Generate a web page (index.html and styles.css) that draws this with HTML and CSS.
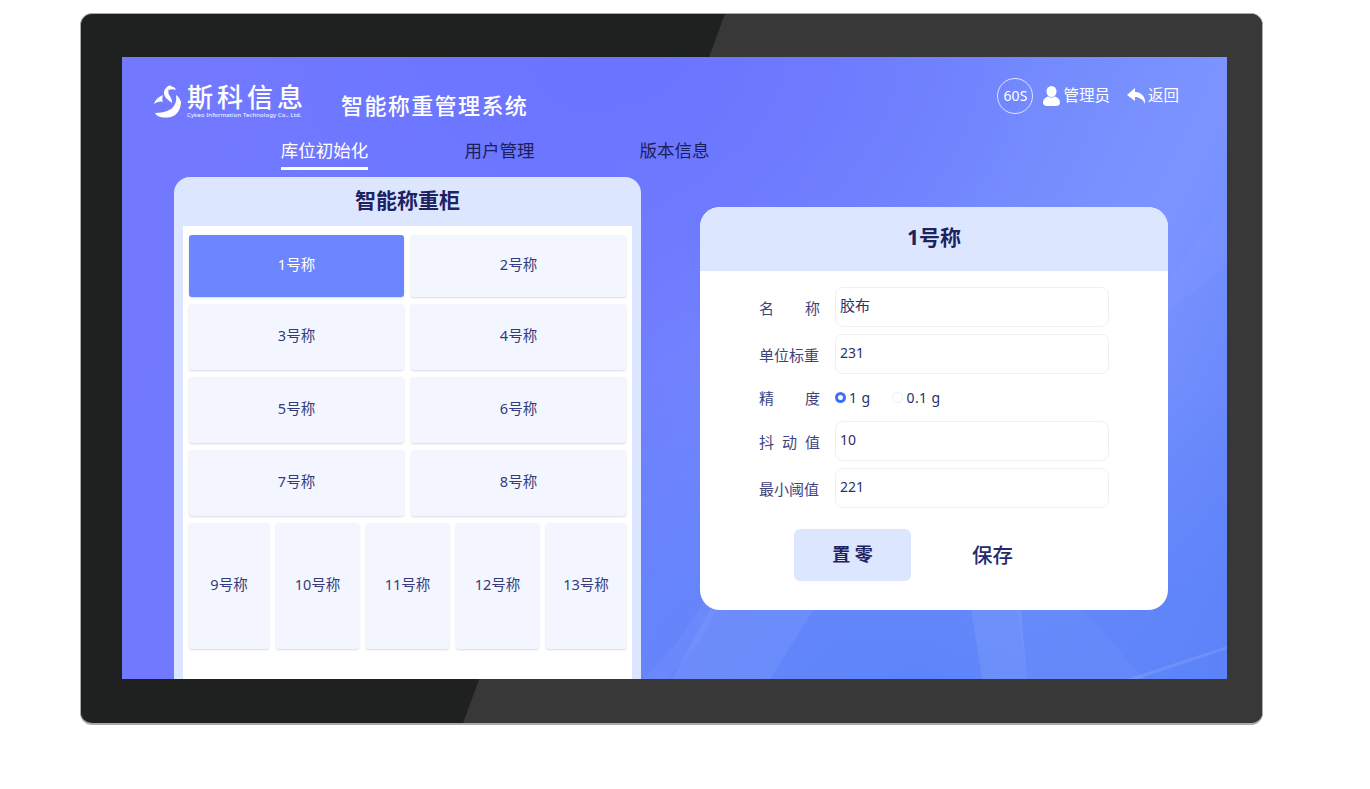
FILE: index.html
```html
<!DOCTYPE html>
<html lang="zh-CN">
<head>
  <meta charset="UTF-8">
  <title>智能称重管理系统</title>
  <link rel="stylesheet" href="styles.css">
</head>
<body>
<div class="device">
  <div class="screen">
    <svg class="decor" width="1105" height="622" viewBox="0 0 1105 622">
      <polygon points="550,622 595,540 700,540 648,622" fill="#fff" opacity="0.06"></polygon>
      <path d="M520,622C545,600 565,575 585,540L600,540C585,580 560,605 545,622Z" fill="#fff" opacity="0.04"></path>
      <polygon points="847,540 898,540 905,622 860,622" fill="#fff" opacity="0.08"></polygon>
      <polygon points="894,540 950,540 1022,622 905,622" fill="#fff" opacity="0.03"></polygon>
      <polygon points="1105,210 1010,280 1105,140" fill="#fff" opacity="0.025"></polygon>
      <polygon points="1005,622 1105,589 1105,592 1016,622" fill="#fff" opacity="0.1"></polygon>
    </svg>

    <!-- 顶部 -->
    <div class="top-bar">
      <div class="logo">
        <svg class="logo-mark" width="27" height="33" viewBox="0 0 27 33">
          <path d="M1 28C4 33 10 33 17 32C24 30 27 23 27 17C26 14 24 11 22 10C23 16 21 21 17 24C12 27 6 28 1 28Z" fill="#fff"></path>
          <path d="M17 0C13 1 10 4 10 8C10 12 14 15 18 18C18.500 14 15.500 11 14.500 8.500C14 5 15 2 17 0Z" fill="#fff"></path>
          <path d="M15 1C18 1 21 2 22 5C20 4 17 4 15 5Z" fill="#fff"></path>
          <path d="M0 19C1 15 4 12 9 10C8 13 8 15 9 17C6 16 3 17 0 19Z" fill="#fff"></path>
        </svg>
        <div class="logo-text">
          <div class="logo-cn">斯科信息</div>
          <div class="logo-en">Cykeo Information Technology Co., Ltd.</div>
        </div>
      </div>
      <div class="sys-title">智能称重管理系统</div>
      <div class="top-right">
        <div class="timer">60S</div>
        <svg class="icon-user" width="17" height="20" viewBox="0 0 17 20">
          <ellipse cx="8.500" cy="5.500" rx="5" ry="5.500" fill="#fff"></ellipse>
          <path d="M0 17C0 13 3 11 5 10.500C7 12 10 12 12 10.500C14 11 17 13 17 17C17 19 15 20 13 20H4C2 20 0 19 0 17Z" fill="#fff"></path>
        </svg>
        <span class="top-link">管理员</span>
        <svg class="icon-back" width="19" height="16" viewBox="0 0 19 16">
          <path d="M8 0L0 7L8 13V9C12 9 16 11 18 16C19 10 15 4 8 4Z" fill="#fff"></path>
        </svg>
        <span class="top-link">返回</span>
      </div>
    </div>

    <!-- 导航 -->
    <div class="nav">
      <div class="nav-item active"><span>库位初始化</span></div>
      <div class="nav-item"><span>用户管理</span></div>
      <div class="nav-item"><span>版本信息</span></div>
    </div>

    <div class="main">
      <!-- 左侧称重柜 -->
      <div class="cabinet">
        <div class="cabinet-title">智能称重柜</div>
        <div class="cabinet-body">
          <div class="scale-grid">
            <div class="scale selected">1号称</div>
            <div class="scale">2号称</div>
            <div class="scale">3号称</div>
            <div class="scale">4号称</div>
            <div class="scale">5号称</div>
            <div class="scale">6号称</div>
            <div class="scale">7号称</div>
            <div class="scale">8号称</div>
          </div>
          <div class="scale-row">
            <div class="scale">9号称</div>
            <div class="scale">10号称</div>
            <div class="scale">11号称</div>
            <div class="scale">12号称</div>
            <div class="scale">13号称</div>
          </div>
        </div>
      </div>

      <!-- 右侧表单 -->
      <div class="detail">
        <div class="detail-title">1号称</div>
        <div class="detail-body">
          <div class="form-row">
            <div class="form-label spread">名<i></i>称</div>
            <div class="form-input cn">胶布</div>
          </div>
          <div class="form-row">
            <div class="form-label">单位标重</div>
            <div class="form-input">231</div>
          </div>
          <div class="form-row radio-row">
            <div class="form-label spread">精<i></i>度</div>
            <div class="radio on"></div><span class="radio-text first">1 g</span>
            <div class="radio"></div><span class="radio-text">0.1 g</span>
          </div>
          <div class="form-row">
            <div class="form-label spread">抖<i></i>动<i></i>值</div>
            <div class="form-input">10</div>
          </div>
          <div class="form-row">
            <div class="form-label">最小阈值</div>
            <div class="form-input">221</div>
          </div>
          <div class="form-actions">
            <div class="btn-zero">置 零</div>
            <div class="btn-save">保存</div>
          </div>
        </div>
      </div>
    </div>
  </div>
</div>
</body>
</html>
```

FILE: styles.css
```css
* {
  box-sizing: border-box;
}
html, body {
  margin: 0;
  height: 100%;
  overflow: hidden;
  background: #fff;
  font-family: "Noto Sans", "Noto Sans CJK SC", sans-serif;
}
/* 显示器外框 */
.device {
  position: relative;
  width: 1183px;
  height: 712px;
  margin: 13px 0 0 80px;
  padding: 43px 36px 46px 41px;
  background: #1f2020;
  border: 1px solid #a9abab;
  border-bottom-width: 2px;
  border-radius: 12px;
  overflow: hidden;
}
.device::before {
  content: "";
  position: absolute;
  inset: 0;
  background: #383838;
  clip-path: polygon(644px 0, 100% 0, 100% 100%, 382px 100%);
}
.screen {
  position: relative;
  width: 1105px;
  height: 622px;
  overflow: hidden;
  background:
    radial-gradient(ellipse 620px 330px at 72% 100%, #5c84f9 0, rgba(92, 132, 249, 0) 100%),
    radial-gradient(ellipse 420px 300px at 45% 0, #6a74ff 0, rgba(106, 116, 255, 0) 100%),
    linear-gradient(115deg, #7379ff 0, #7079ff 35%, #7389fd 65%, #7c94ff 80%, #5b80f8 100%);
}
.decor {
  position: absolute;
  left: 0;
  top: 0;
}
/* 顶部 */
.top-bar {
  position: relative;
  display: flex;
  height: 57px;
  padding: 26px 48px 0 32px;
}
.logo {
  display: flex;
  width: 149px;
  height: 37px;
  color: #fff;
}
.logo-mark {
  flex: none;
  margin: 2px 6px 0 0;
}
.logo-cn {
  font-size: 26px;
  line-height: 28px;
  letter-spacing: 4px;
  white-space: nowrap;
  font-weight: 500;
}
.logo-en {
  font-size: 6px;
  line-height: 9px;
  letter-spacing: 0.1px;
  white-space: nowrap;
}
.sys-title {
  margin: 7px 0 0 38px;
  color: #fff;
  font-size: 22px;
  line-height: 30px;
  letter-spacing: 1.4px;
  font-weight: 500;
}
.top-right {
  display: flex;
  align-items: center;
  height: 36px;
  margin: -5px 0 0 auto;
  color: #fff;
}
.timer {
  width: 36px;
  height: 36px;
  border: 1px solid #dfe4ff;
  border-radius: 50%;
  font-size: 14px;
  line-height: 33px;
  text-align: center;
}
.icon-user {
  margin: 0 3px 0 10px;
}
.icon-back {
  margin: 0 2px 0 17px;
}
.top-link {
  padding-bottom: 4px;
  font-size: 15.500px;
}
/* 导航 */
.nav {
  position: relative;
  display: grid;
  grid-template-columns: repeat(3, 175px);
  justify-content: start;
  height: 63px;
  padding: 23px 0 0 115px;
}
.nav-item {
  text-align: center;
  font-size: 17.500px;
  line-height: 27px;
  color: #1c2058;
}
.nav-item span {
  display: inline-block;
  height: 33px;
}
.nav-item.active {
  color: #fff;
}
.nav-item.active span {
  border-bottom: 3px solid #fff;
}
/* 主体 */
.main {
  position: relative;
  display: flex;
  align-items: flex-start;
  padding-left: 52px;
}
.cabinet {
  flex: none;
  width: 467px;
  height: 520px;
  padding: 0 9px;
  background: #dce6fe;
  border-radius: 16px 16px 0 0;
}
.cabinet-title {
  height: 49px;
  text-align: center;
  color: #1d2262;
  font-size: 21px;
  line-height: 47px;
  font-weight: 700;
}
.cabinet-body {
  height: 471px;
  padding: 9px 6px;
  background: #fff;
}
.scale {
  display: flex;
  align-items: center;
  justify-content: center;
  padding-bottom: 6px;
  background: #f3f6fe;
  border-radius: 3px;
  box-shadow: 0 1px 2px rgba(60, 70, 120, 0.2);
  color: #353a7c;
  font-size: 14.500px;
}
.scale.selected {
  background: #6c86fd;
  color: #fff;
}
.scale-grid {
  display: grid;
  grid-template-columns: 215px 215px;
  grid-template-rows: 62px 66px 66px 66px;
  gap: 7px;
}
.scale-row {
  display: grid;
  grid-template-columns: 80px 83px 83px 83px 80px;
  gap: 7px;
  height: 126px;
  margin-top: 7px;
}
/* 右侧表单 */
.detail {
  flex: none;
  width: 468px;
  height: 403px;
  margin: 30px 0 0 59px;
  background: #fff;
  border-radius: 20px;
  overflow: hidden;
}
.detail-title {
  height: 64px;
  background: #dce6fe;
  text-align: center;
  color: #1d2262;
  font-size: 21px;
  line-height: 60px;
  font-weight: 700;
}
.detail-body {
  padding: 16px 59px 0;
}
.form-row {
  display: flex;
  align-items: center;
  height: 40px;
  margin-bottom: 7px;
}
.radio-row {
  height: 32px;
  margin: 0 0 8px;
}
.form-label {
  flex: none;
  width: 76px;
  color: #3f437c;
  font-size: 15px;
  white-space: nowrap;
}
.form-label.spread {
  display: flex;
  width: 61px;
  margin-right: 15px;
  justify-content: space-between;
}
.form-label i {
  display: block;
}
.form-input {
  width: 274px;
  height: 40px;
  padding-left: 4px;
  border: 1px solid #eef0f4;
  border-radius: 8px;
  color: #2d3068;
  font-size: 14px;
  line-height: 35px;
}
.form-input.cn {
  font-size: 15px;
}
.radio {
  width: 11px;
  height: 11px;
  border: 1px solid #eef0f4;
  border-radius: 50%;
}
.radio.on {
  border: 3px solid #3f6ff5;
}
.radio-text {
  margin-left: 3px;
  color: #2d3068;
  font-size: 14px;
  letter-spacing: 0.4px;
}
.radio-text.first {
  margin-right: 22px;
}
.form-actions {
  display: flex;
  align-items: center;
  margin: 21px 0 0 35px;
}
.btn-zero {
  width: 117px;
  height: 52px;
  background: #dce6fe;
  border-radius: 6px;
  text-align: center;
  color: #1d2262;
  font-size: 18px;
  line-height: 51px;
  font-weight: 700;
}
.btn-save {
  margin-left: 61px;
  padding-bottom: 2px;
  color: #262a6c;
  font-size: 20.500px;
  font-weight: 500;
}
```
